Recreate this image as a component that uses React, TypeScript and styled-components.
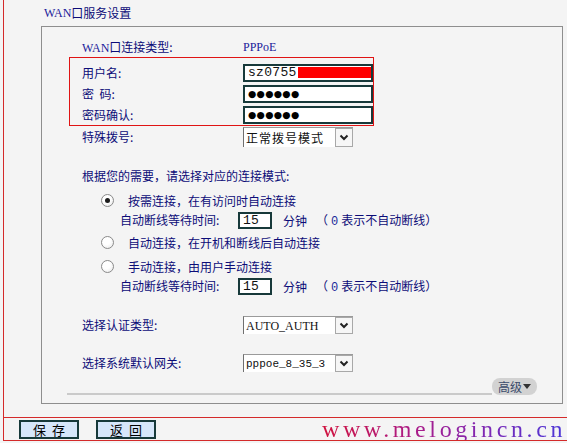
import styled, { createGlobalStyle } from 'styled-components'

const GlobalStyle = createGlobalStyle`
  html,
  body {
    margin: 0;
    padding: 0;
    background: #f4f4f4;
    font-family: 'Noto Sans CJK SC', 'DejaVu Sans', sans-serif;
    font-size: 12px;
    color: #0c0c78;
  }
`

const Frame = styled.div`
  margin-left: 3px;
  border-left: 1px solid #d42a2a;
  height: 441px;
  display: flex;
  flex-direction: column;
`

const Title = styled.div`
  height: 26px;
  line-height: 26px;
  padding-left: 40px;
  display: flex;
  align-items: center;

  > b {
    font-family: 'Liberation Serif', serif;
    font-weight: normal;
    color: #1a1a9a;
  }
`

const Box = styled.div`
  margin-left: 37px;
  width: 522px;
  height: 378px;
  box-sizing: border-box;
  border: 1px solid #8e8e8e;
  padding-top: 10px;
  display: flex;
  flex-direction: column;
`

const Row = styled.div<{ $h?: number; $mt?: number; $indent?: number }>`
  height: ${({ $h }) => $h ?? 20}px;
  margin-top: ${({ $mt }) => $mt ?? 0}px;
  padding-left: ${({ $indent }) => $indent ?? 40}px;
  display: flex;
  align-items: center;
  white-space: nowrap;
`

const Label = styled.span<{ $w?: number }>`
  width: ${({ $w }) => $w ?? 161}px;
  flex-shrink: 0;
  line-height: 16px;
`

const Latin = styled.span`
  font-family: 'Liberation Serif', serif;
  color: #1a1a9a;
`

const RedBox = styled.div`
  margin-left: 27px;
  width: 305px;
  box-sizing: border-box;
  border: 1px solid #e01414;
  padding: 4px 0 0 12px;
  display: flex;
  flex-direction: column;

  > ${Row} {
    padding-left: 0;
  }
`

const TextBox = styled.div<{ $w?: number; $h?: number }>`
  width: ${({ $w }) => $w ?? 130}px;
  height: ${({ $h }) => $h ?? 18}px;
  box-sizing: border-box;
  border: 2px solid #17393a;
  background: #fff;
  padding-left: 3px;
  display: flex;
  align-items: center;
  overflow: hidden;
  font-family: 'Liberation Mono', monospace;
  font-size: 13px;
  color: #111;
  letter-spacing: 0.3px;
`

const Redact = styled.span`
  display: inline-block;
  width: 75px;
  height: 11px;
  background: #ff0000;
  margin-left: 1px;
`

const Dots = styled.span`
  font-family: 'DejaVu Sans', sans-serif;
  font-size: 9.5px;
  letter-spacing: 0.3px;
  color: #000;
`

const Select = styled.div<{ $h?: number }>`
  width: 110px;
  height: ${({ $h }) => $h ?? 18}px;
  box-sizing: border-box;
  border-left: 1px solid #6f6f6f;
  border-top: 1px solid #9a9a9a;
  background: #fff;
  display: flex;
  align-items: center;
`

const SelectText = styled.span<{ $font?: string; $size?: number; $ls?: number }>`
  flex: 1;
  min-width: 0;
  padding-left: 2px;
  font-family: ${({ $font }) => $font ?? "'Noto Sans CJK SC', sans-serif"};
  font-size: ${({ $size }) => $size ?? 13}px;
  letter-spacing: ${({ $ls }) => $ls ?? 0}px;
  color: #111;
  line-height: 16px;
  overflow: hidden;
`

const DropButton = styled.span`
  width: 18px;
  height: 100%;
  flex-shrink: 0;
  box-sizing: border-box;
  border: 1px solid #a8a8a8;
  background: #f6f6f6;
  display: flex;
  align-items: center;
  justify-content: center;
`

const Radio = styled.span<{ $on?: boolean }>`
  width: 13px;
  height: 13px;
  box-sizing: border-box;
  border-radius: 50%;
  border: 1px solid #8a8a8a;
  background: radial-gradient(circle at 40% 35%, #ffffff 40%, #e4e4e4 100%);
  display: flex;
  align-items: center;
  justify-content: center;
  margin-right: 14px;

  &::after {
    content: '';
    width: 5px;
    height: 5px;
    border-radius: 50%;
    background: ${({ $on }) => ($on ? '#1c1c1c' : 'transparent')};
  }
`

const Unit = styled.span`
  margin-left: 11px;
`

const Hint = styled.span`
  margin-left: 9px;

  > b {
    font-family: 'Liberation Mono', monospace;
    font-weight: normal;
    color: #1a2a9a;
    margin: 0 3px;
  }
`

const FooterRow = styled.div`
  margin: 3px 25px 0 25px;
  height: 19px;
  display: flex;
  align-items: flex-end;
`

const Rule = styled.div`
  flex: 1;
  height: 2px;
  background: #cacaca;
`

const AdvancedPill = styled.span`
  width: 45px;
  height: 17px;
  border-radius: 8px;
  background: #d2d2d2;
  display: flex;
  align-items: center;
  justify-content: center;
  gap: 1px;
  font-size: 12px;
  color: #3a4a6a;
  line-height: 14px;
`

const BottomBar = styled.div`
  margin-top: 13px;
  height: 22px;
  border-top: 1px solid #d42a2a;
  border-bottom: 1px solid #d42a2a;
  padding-left: 15px;
  display: flex;
  align-items: center;
  gap: 17px;
`

const Button = styled.span`
  width: 60px;
  height: 19px;
  box-sizing: border-box;
  border: 2px solid #17393a;
  background: #d6e6fa;
  display: flex;
  align-items: center;
  justify-content: center;
  font-size: 13px;
  color: #000;
  letter-spacing: 6px;
  padding-left: 6px;
  line-height: 15px;
`

const Watermark = styled.span`
  margin-left: auto;
  margin-right: 1px;
  font-family: 'Liberation Serif', serif;
  font-size: 24px;
  line-height: 22px;
  letter-spacing: 3.6px;
  white-space: nowrap;
  background: linear-gradient(90deg, #d0123e 0%, #a81c8c 40%, #7a2ab8 70%, #4a36d8 100%);
  -webkit-background-clip: text;
  background-clip: text;
  color: transparent;
`

const Chevron = () => (
  <svg width="10" height="7" viewBox="0 0 10 7">
    <polyline points="1.5,1.5 5,5 8.5,1.5" fill="none" stroke="#222" strokeWidth="2" />
  </svg>
)

const Caret = () => (
  <svg width="8" height="5" viewBox="0 0 8 5">
    <polygon points="0,0 8,0 4,5" fill="#333" />
  </svg>
)

const WaitRow = () => (
  <Row $indent={78}>
    <Label $w={118}>自动断线等待时间:</Label>
    <TextBox $w={34} $h={17}>
      15
    </TextBox>
    <Unit>分钟</Unit>
    <Hint>
      （<b>0</b>表示不自动断线）
    </Hint>
  </Row>
)

export default function App() {
  return (
    <>
      <GlobalStyle />
      <Frame>
        <Title>
          <b>WAN</b>口服务设置
        </Title>
        <Box>
          <Row>
            <Label>
              <Latin>WAN</Latin>口连接类型:
            </Label>
            <Latin>PPPoE</Latin>
          </Row>
          <RedBox>
            <Row $h={21}>
              <Label>用户名:</Label>
              <TextBox>
                sz0755
                <Redact />
              </TextBox>
            </Row>
            <Row $h={21}>
              <Label>密&nbsp;&nbsp;码:</Label>
              <TextBox>
                <Dots>●●●●●●</Dots>
              </TextBox>
            </Row>
            <Row $h={21}>
              <Label>密码确认:</Label>
              <TextBox>
                <Dots>●●●●●●</Dots>
              </TextBox>
            </Row>
          </RedBox>
          <Row $h={22}>
            <Label>特殊拨号:</Label>
            <Select $h={20}>
              <SelectText $size={12} $ls={1}>
                正常拨号模式
              </SelectText>
              <DropButton>
                <Chevron />
              </DropButton>
            </Select>
          </Row>
          <Row $mt={17}>根据您的需要，请选择对应的连接模式:</Row>
          <Row $mt={5} $indent={59}>
            <Radio $on />
            按需连接，在有访问时自动连接
          </Row>
          <WaitRow />
          <Row $mt={2} $indent={59}>
            <Radio />
            自动连接，在开机和断线后自动连接
          </Row>
          <Row $mt={4} $indent={59}>
            <Radio />
            手动连接，由用户手动连接
          </Row>
          <WaitRow />
          <Row $mt={19}>
            <Label>选择认证类型:</Label>
            <Select>
              <SelectText $font="'Liberation Serif', serif" $size={12}>
                AUTO_AUTH
              </SelectText>
              <DropButton>
                <Chevron />
              </DropButton>
            </Select>
          </Row>
          <Row $mt={18}>
            <Label>选择系统默认网关:</Label>
            <Select>
              <SelectText $font="'Liberation Mono', monospace" $size={11}>
                pppoe_8_35_3
              </SelectText>
              <DropButton>
                <Chevron />
              </DropButton>
            </Select>
          </Row>
          <FooterRow>
            <Rule />
            <AdvancedPill>
              高级
              <Caret />
            </AdvancedPill>
          </FooterRow>
        </Box>
        <BottomBar>
          <Button>保存</Button>
          <Button>返回</Button>
          <Watermark>www.melogincn.cn</Watermark>
        </BottomBar>
      </Frame>
    </>
  )
}
